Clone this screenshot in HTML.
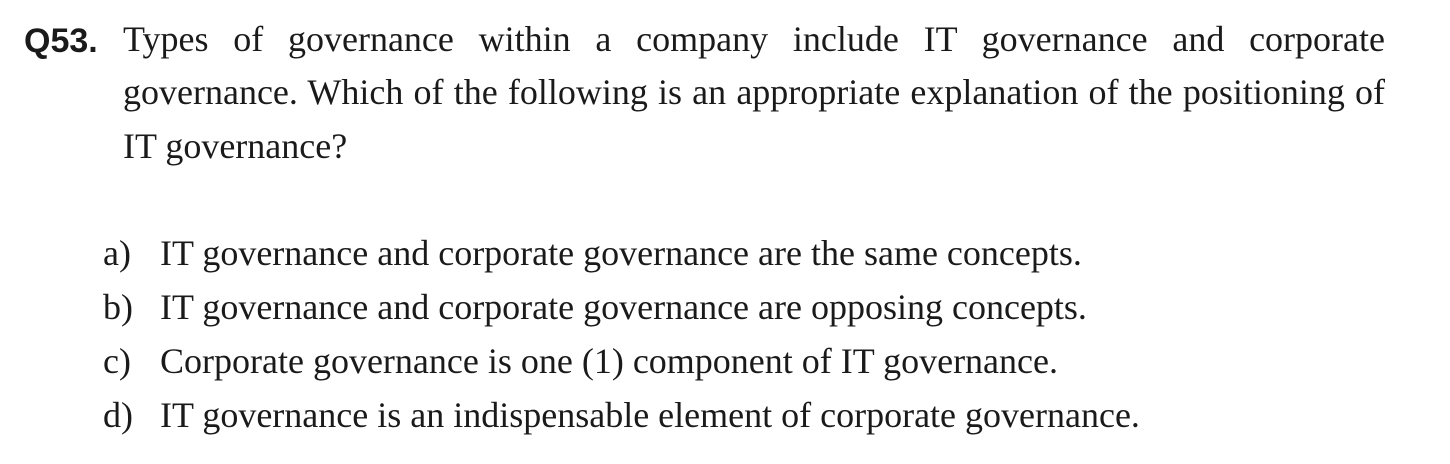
<!DOCTYPE html>
<html><head><meta charset="utf-8"><style>
html,body{margin:0;padding:0;background:#fff;width:1450px;height:464px;overflow:hidden}
body{position:relative;font-family:"Liberation Serif",serif;color:#1a1a1a;font-size:36px}
.q{position:absolute;left:24px;top:19px;font-family:"Liberation Sans",sans-serif;font-weight:bold;font-size:34px;line-height:44px}
.ln{position:absolute;left:123px;width:1262px;line-height:54px;white-space:nowrap}
.j{text-align:justify;text-align-last:justify;white-space:normal}
.opt{position:absolute;left:103px;line-height:54px;white-space:nowrap}
.opt span{display:inline-block;width:57px}
</style></head><body>
<div class="q">Q53.</div>
<div class="ln j" style="top:12px">Types of governance within a company include IT governance and corporate</div>
<div class="ln j" style="top:65px">governance. Which of the following is an appropriate explanation of the positioning of</div>
<div class="ln" style="top:119px">IT governance?</div>
<div class="opt" style="top:226px"><span>a)</span>IT governance and corporate governance are the same concepts.</div>
<div class="opt" style="top:280px"><span>b)</span>IT governance and corporate governance are opposing concepts.</div>
<div class="opt" style="top:334px"><span>c)</span>Corporate governance is one (1) component of IT governance.</div>
<div class="opt" style="top:388px"><span>d)</span>IT governance is an indispensable element of corporate governance.</div>
</body></html>
